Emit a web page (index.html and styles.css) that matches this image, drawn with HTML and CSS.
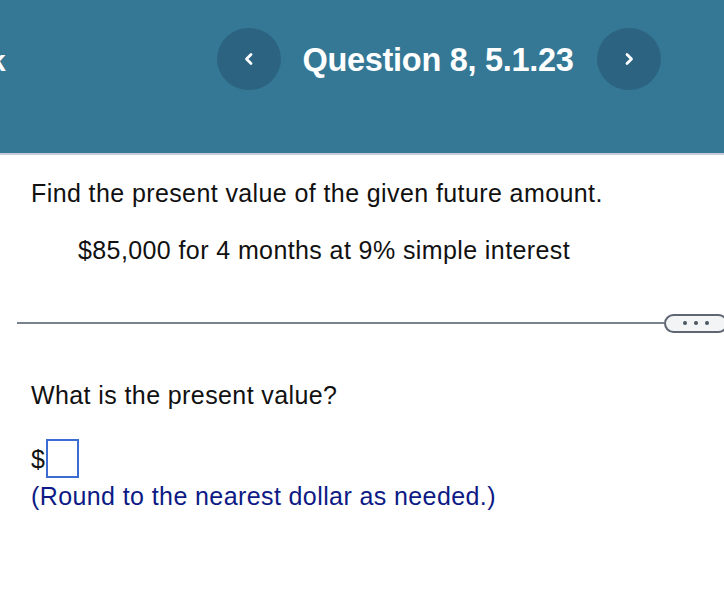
FILE: index.html
```html
<!DOCTYPE html>
<html>
<head>
<meta charset="utf-8">
<link rel="stylesheet" href="styles.css">
</head>
<body>
<header class="topbar">
  <span class="back">k</span>
  <div class="nav">
    <button class="circle" aria-label="Previous question">
      <svg width="14" height="16" viewBox="0 0 14 16"><path d="M9 3.5 L4.5 8 L9 12.5" fill="none" stroke="#fff" stroke-width="2.8" stroke-linecap="round" stroke-linejoin="round"/></svg>
    </button>
    <h1 class="title">Question 8, 5.1.23</h1>
    <button class="circle" aria-label="Next question">
      <svg width="14" height="16" viewBox="0 0 14 16"><path d="M5 3.5 L9.5 8 L5 12.5" fill="none" stroke="#fff" stroke-width="2.8" stroke-linecap="round" stroke-linejoin="round"/></svg>
    </button>
  </div>
</header>
<main class="content">
  <p class="prompt">Find the present value of the given future amount.</p>
  <p class="given">$85,000 for 4 months at 9% simple interest</p>
  <div class="divider">
    <span class="rule"></span>
    <span class="more"><i></i><i></i><i></i></span>
  </div>
  <p class="question">What is the present value?</p>
  <div class="answer"><span class="dollar">$</span><span class="box"></span></div>
  <p class="hint">(Round to the nearest dollar as needed.)</p>
</main>
</body>
</html>
```
FILE: styles.css
```css
* { box-sizing: border-box; }
html, body { margin: 0; padding: 0; background: #fff; }
body {
  font-family: "Liberation Sans", Arial, sans-serif;
  color: #111;
  width: 724px;
  height: 602px;
  overflow: hidden;
}
.topbar {
  position: relative;
  height: 155px;
  background: #347896;
  border-bottom: 2px solid #c9cdd9;
  display: flex;
  justify-content: center;
  padding-top: 28px;
}
.back {
  position: absolute;
  left: -11px;
  top: 44px;
  color: #fff;
  font-weight: bold;
  font-size: 30px;
}
.nav {
  display: flex;
  align-items: flex-start;
  margin-left: 154px;
}
.circle {
  width: 64px;
  height: 62px;
  border-radius: 50%;
  border: none;
  background: #2c6381;
  display: flex;
  align-items: center;
  justify-content: center;
  padding: 0;
}
.title {
  margin: 1px 24px 0 22px;
  color: #fff;
  font-size: 32.5px;
  font-weight: bold;
  line-height: 62px;
  letter-spacing: -0.3px;
}
.content {
  padding: 16px 0 0 31px;
  font-size: 25px;
  letter-spacing: 0.4px;
}
.prompt {
  margin: 0;
  line-height: 44px;
}
.given {
  margin: 21px 0 0 47px;
  line-height: 28px;
}
.divider {
  display: flex;
  align-items: center;
  margin: 49px 0 0 -14px;
  height: 20px;
}
.rule {
  flex: 1;
  height: 2px;
  background: #78818c;
}
.more {
  width: 64px;
  height: 19px;
  border: 2px solid #5d6671;
  border-radius: 10px;
  background: #f3f4f6;
  display: flex;
  align-items: center;
  justify-content: center;
  gap: 7px;
  margin-right: -4px;
}
.more i {
  width: 4px;
  height: 4px;
  border-radius: 50%;
  background: #4b5560;
}
.question {
  margin: 47px 0 0 0;
  line-height: 30px;
}
.answer {
  display: flex;
  align-items: center;
  margin-top: 29px;
}
.dollar {
  line-height: 26px;
}
.box {
  width: 33px;
  height: 39px;
  border: 2px solid #3c6cd2;
  margin-left: 1px;
}
.hint {
  margin: 3px 0 0 0;
  line-height: 30px;
  color: #0d1a85;
}
```
